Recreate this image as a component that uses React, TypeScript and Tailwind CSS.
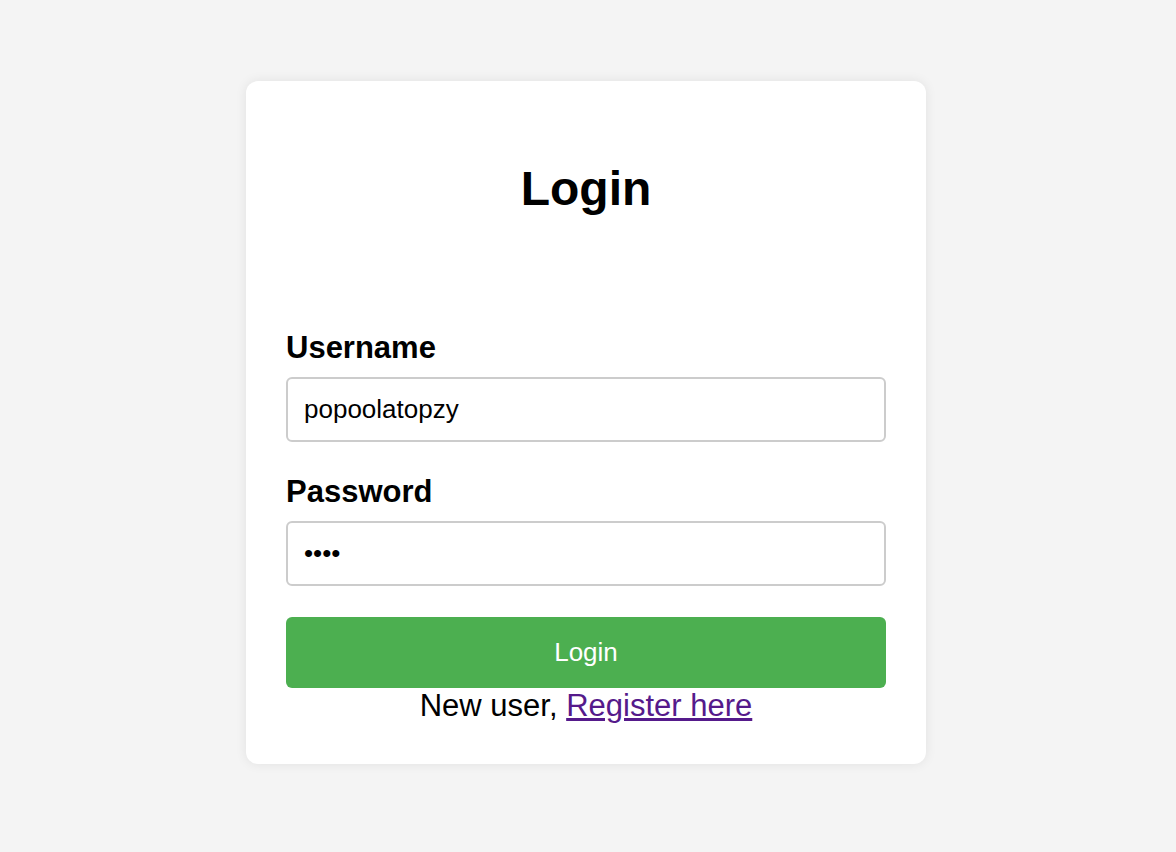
import React from 'react';

export default function App() {
  return (
    <div className="min-h-screen bg-[#f4f4f4] flex justify-center pt-[81px] pr-1 font-['Liberation_Sans',Arial,sans-serif] text-black">
      <div className="w-[680px] h-fit bg-white rounded-xl shadow-[0_0_12px_rgba(0,0,0,0.08)] p-10">
        <h1 className="mt-[44px] text-center text-[48px] leading-[48px] font-bold">Login</h1>

        <form className="mt-[117px]" onSubmit={(e) => e.preventDefault()}>
          <label className="block text-[31px] leading-[36px] font-bold">Username</label>
          <input
            className="mt-[11px] block w-full h-[65px] border-2 border-[#cccccc] rounded-md px-4 text-[26px] text-black outline-none"
            defaultValue="popoolatopzy"
          />

          <label className="mt-[32px] block text-[31px] leading-[36px] font-bold">Password</label>
          <input
            type="password"
            className="mt-[11px] block w-full h-[65px] border-2 border-[#cccccc] rounded-md px-4 text-[26px] text-black outline-none"
            defaultValue="1234"
          />

          <button
            type="submit"
            className="mt-[31px] block w-full h-[71px] bg-[#4caf50] text-white rounded-md text-[26px]"
          >
            Login
          </button>

          <p className="text-center text-[31px] leading-[36px]">
            New user, <a href="#" className="text-[#551a8b] underline">Register here</a>
          </p>
        </form>
      </div>
    </div>
  );
}
